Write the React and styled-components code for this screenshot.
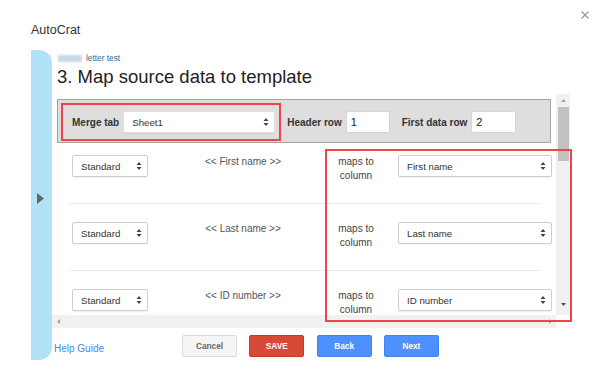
import React from 'react';
import styled, { createGlobalStyle } from 'styled-components';

const GlobalStyle = createGlobalStyle`
    html, body {
        margin: 0;
        padding: 0;
        background: #fff;
        font-family: "Liberation Sans", Arial, sans-serif;
    }
`;

const Dialog = styled.div`
    position: relative;
    width: 600px;
    height: 374px;
    box-sizing: border-box;
    padding: 23px 0 0 31px;
    overflow: hidden;
`;

const CloseButton = styled.div`
    position: absolute;
    top: 11px;
    right: 11px;
    width: 8px;
    height: 8px;
    display: flex;
`;

const DialogTitle = styled.div`
    font-size: 12.5px;
    line-height: 15px;
    color: #333;
`;

const Main = styled.div`
    display: flex;
    margin-top: 12px;
    height: 310px;
`;

const Sidebar = styled.div`
    width: 21px;
    flex: none;
    background: #b1e2f7;
    border-radius: 0 13px 13px 0;
    box-sizing: border-box;
    padding: 140px 0 0 6px;
`;

const Content = styled.div`
    display: flex;
    flex-direction: column;
    width: 518px;
    padding-top: 3px;
`;

const Crumb = styled.div`
    display: flex;
    align-items: center;
    gap: 4px;
    height: 10px;
    padding-left: 6px;
    font-size: 8.3px;
    line-height: 10px;
    color: #2f6c8e;
`;

const Blur = styled.span`
    width: 24px;
    height: 7px;
    background: #c9d8e3;
    filter: blur(0.8px);
`;

const Heading = styled.h1`
    margin: 3px 0 0 5px;
    font-size: 18.5px;
    line-height: 22px;
    font-weight: normal;
    color: #222;
`;

const ScrollBox = styled.div`
    position: relative;
    margin-top: 6px;
    height: 234px;
    display: grid;
    grid-template-columns: 504px 14px;
    grid-template-rows: 221px 13px;
`;

const Viewport = styled.div`
    overflow: hidden;
    padding-top: 5px;
    box-sizing: border-box;
`;

const VBar = styled.div`
    background: #f1f1f1;
    display: flex;
    flex-direction: column;
    align-items: center;
    padding-top: 4px;
    box-sizing: border-box;
`;

const Thumb = styled.div`
    width: 11px;
    height: 54px;
    margin-top: 4px;
    background: #c1c1c1;
`;

const VDown = styled.div`
    margin-top: auto;
    margin-bottom: 4px;
`;

const HBar = styled.div`
    background: #f1f1f1;
    display: flex;
    align-items: center;
    justify-content: space-between;
    padding: 0 3px 0 4px;
`;

const Corner = styled.div`
    background: #fff;
`;

const Panel = styled.div`
    margin: 0 5px;
    height: 44px;
    box-sizing: border-box;
    border: 1px solid #a3a3a3;
    background: #dedede;
    padding: 3px 3px 1px;
    display: flex;
    align-items: center;
`;

const MergeGroup = styled.div`
    display: flex;
    align-items: center;
    gap: 4px;
    border: 2px solid #ef4548;
    padding: 6px 4px 6px 9px;
`;

const PanelLabel = styled.span`
    font-size: 10px;
    font-weight: bold;
    color: #333;
    white-space: nowrap;
    margin-left: ${(p) => p.$gap || 0}px;
`;

const TextInput = styled.div`
    width: ${(p) => p.$w}px;
    height: 22px;
    box-sizing: border-box;
    margin-left: 4px;
    background: #fff;
    border: 1px solid #d6d6d6;
    border-radius: 2px;
    padding-left: 4px;
    font-size: 11px;
    line-height: 20px;
    color: #222;
`;

const SelectBox = styled.div`
    width: ${(p) => p.$w}px;
    height: 22px;
    box-sizing: border-box;
    background: #fff;
    border: 1px solid ${(p) => (p.$flat ? '#e2e2e2' : '#cfcfcf')};
    border-radius: 2px;
    box-shadow: 0 1px 1px rgba(0, 0, 0, 0.06);
    display: flex;
    align-items: center;
    justify-content: space-between;
    padding: 0 5px 0 8px;
    font-size: 9.7px;
    color: #333;
`;

const Row = styled.div`
    display: grid;
    grid-template-columns: 76px 142px 36px 154px;
    column-gap: 24px;
    align-items: start;
    padding: 12px 0 20px 20px;
`;

const FieldName = styled.div`
    text-align: center;
    font-size: 10px;
    line-height: 14px;
    color: #555;
`;

const MapsTo = styled.div`
    justify-self: center;
    text-align: center;
    white-space: nowrap;
    font-size: 10px;
    line-height: 14px;
    color: #444;
`;

const Divider = styled.div`
    height: 1px;
    background: #ececec;
    margin: 0 16px 6px 17px;
`;

const Annotation = styled.div`
    position: absolute;
    left: 273px;
    top: 55px;
    width: 247px;
    height: 173px;
    box-sizing: border-box;
    border: 2px solid #ef4548;
    pointer-events: none;
`;

const Footer = styled.div`
    display: flex;
    align-items: flex-end;
    padding-top: 7px;
`;

const HelpLink = styled.a`
    width: 128px;
    padding-left: 2px;
    margin-bottom: 2px;
    font-size: 10px;
    line-height: 12px;
    color: #4a86e8;
    text-decoration: none;
`;

const Buttons = styled.div`
    display: flex;
    gap: 12.3px;
`;

const palette = {
    plain: { bg: '#f5f5f5', border: '#dcdcdc', color: '#666' },
    red: { bg: '#d84a38', border: '#c53727', color: '#fff' },
    blue: { bg: '#4d90fe', border: '#3f83f2', color: '#fff' },
};

const Button = styled.button`
    width: 55px;
    height: 22px;
    padding: 0;
    border-radius: 2px;
    border: 1px solid ${(p) => palette[p.$kind].border};
    background: ${(p) => palette[p.$kind].bg};
    color: ${(p) => palette[p.$kind].color};
    font-family: inherit;
    font-size: 8.3px;
    font-weight: bold;
`;

const Updown = () => (
    <svg width="6" height="10" viewBox="0 0 6 10">
        <path d="M0.5 4 L3 1 L5.5 4 Z M0.5 6 L3 9 L5.5 6 Z" fill="#444" />
    </svg>
);

const Arrow = ({ dir, color = '#a3a3a3' }) => {
    const d = {
        up: 'M0 4 L2.5 1 L5 4 Z',
        down: 'M0 1 L2.5 4 L5 1 Z',
        left: 'M4 0 L1 2.5 L4 5 Z',
        right: 'M1 0 L4 2.5 L1 5 Z',
    }[dir];
    return (
        <svg width="5" height="5" viewBox="0 0 5 5">
            <path d={d} fill={color} />
        </svg>
    );
};

const Select = ({ w, flat, children }) => (
    <SelectBox $w={w} $flat={flat}>
        <span>{children}</span>
        <Updown />
    </SelectBox>
);

const fields = ['First name', 'Last name', 'ID number'];

const App = () => {
    return (
        <Dialog>
            <GlobalStyle />
            <CloseButton>
                <svg width="8" height="8" viewBox="0 0 8 8">
                    <path d="M0.5 0.5 L7.5 7.5 M7.5 0.5 L0.5 7.5" stroke="#9a9a9a" strokeWidth="1.3" />
                </svg>
            </CloseButton>
            <DialogTitle>AutoCrat</DialogTitle>
            <Main>
                <Sidebar>
                    <svg width="7" height="11" viewBox="0 0 7 11">
                        <path d="M0 0 L7 5.5 L0 11 Z" fill="#666" />
                    </svg>
                </Sidebar>
                <Content>
                    <Crumb>
                        <Blur />
                        <span>letter test</span>
                    </Crumb>
                    <Heading>3. Map source data to template</Heading>
                    <ScrollBox>
                        <Viewport>
                            <Panel>
                                <MergeGroup>
                                    <PanelLabel>Merge tab</PanelLabel>
                                    <Select w={152} flat>Sheet1</Select>
                                </MergeGroup>
                                <PanelLabel $gap={6}>Header row</PanelLabel>
                                <TextInput $w={44}>1</TextInput>
                                <PanelLabel $gap={12}>First data row</PanelLabel>
                                <TextInput $w={45}>2</TextInput>
                            </Panel>
                            {fields.map((f, i) => (
                                <React.Fragment key={f}>
                                    {i > 0 && <Divider />}
                                    <Row>
                                        <Select w={76}>Standard</Select>
                                        <FieldName>&lt;&lt; {f} &gt;&gt;</FieldName>
                                        <MapsTo>
                                            maps to
                                            <br />
                                            column
                                        </MapsTo>
                                        <Select w={154}>{f}</Select>
                                    </Row>
                                </React.Fragment>
                            ))}
                        </Viewport>
                        <VBar>
                            <Arrow dir="up" />
                            <Thumb />
                            <VDown>
                                <Arrow dir="down" color="#505050" />
                            </VDown>
                        </VBar>
                        <HBar>
                            <Arrow dir="left" />
                            <Arrow dir="right" />
                        </HBar>
                        <Corner />
                        <Annotation />
                    </ScrollBox>
                    <Footer>
                        <HelpLink href="#">Help Guide</HelpLink>
                        <Buttons>
                            <Button $kind="plain">Cancel</Button>
                            <Button $kind="red">SAVE</Button>
                            <Button $kind="blue">Back</Button>
                            <Button $kind="blue">Next</Button>
                        </Buttons>
                    </Footer>
                </Content>
            </Main>
        </Dialog>
    );
};

export default App;
